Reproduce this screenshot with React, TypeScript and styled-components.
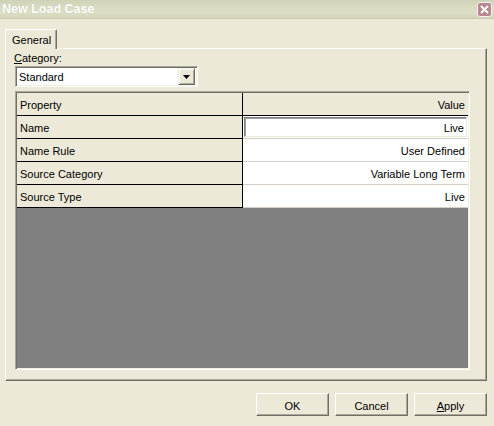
import styled, { createGlobalStyle } from 'styled-components';

const GlobalStyle = createGlobalStyle`
  html, body {
    margin: 0;
    padding: 0;
    background: #ece9d8;
  }
  body {
    font-family: "Liberation Sans", Arial, sans-serif;
    font-size: 11px;
    color: #000;
  }
`;

const Window = styled.div`
  width: 494px;
  height: 426px;
  background: #ece9d8;
  display: flex;
  flex-direction: column;
  overflow: hidden;
`;

const TitleBar = styled.div`
  height: 18px;
  border-bottom: 1px solid #c8cbaf;
  background: linear-gradient(180deg, #cfd2b6 0%, #dadcc2 45%, #dcdfc5 70%, #d3d6ba 100%);
  display: flex;
  align-items: center;
  justify-content: space-between;
  padding: 0 2px 0 2px;
`;

const TitleText = styled.span`
  color: #fff;
  font-weight: bold;
  font-size: 12.5px;
  text-shadow: 0 0 1px #b8bba0;
`;

const CloseButton = styled.div`
  width: 13px;
  height: 13px;
  border: 1px solid #f4eff1;
  border-radius: 3px;
  background: #b6878f;
  display: flex;
  align-items: center;
  justify-content: center;
  margin-top: 1px;
`;

const Body = styled.div`
  flex: 1;
  display: flex;
  flex-direction: column;
  padding: 10px 7px 0 5px;
`;

const TabStrip = styled.div`
  display: flex;
`;

const Tab = styled.div`
  box-sizing: border-box;
  width: 52px;
  height: 20px;
  margin-bottom: -1px;
  position: relative;
  z-index: 1;
  background: #ece9d8;
  border-top: 1px solid #fff;
  border-left: 1px solid #fff;
  border-right: 1px solid #716f64;
  box-shadow: inset -1px 0 #aca899;
  border-radius: 2px 2px 0 0;
  padding: 3px 0 0 6px;
  line-height: 14px;
`;

const Panel = styled.div`
  box-sizing: border-box;
  width: 482px;
  height: 333px;
  border-top: 1px solid #fff;
  border-left: 1px solid #fff;
  border-right: 1px solid #716f64;
  border-bottom: 1px solid #716f64;
  box-shadow: inset -1px -1px #aca899;
  padding: 1px 0 0 9px;
  display: flex;
  flex-direction: column;
`;

const FieldLabel = styled.div`
  line-height: 14px;
  margin-left: -1px;
  padding-top: 1px;
  height: 14px;
`;

const Combo = styled.div`
  box-sizing: border-box;
  width: 183px;
  height: 21px;
  margin-top: 1px;
  background: #fff;
  border-top: 1px solid #aca899;
  border-left: 1px solid #aca899;
  border-right: 1px solid #fff;
  border-bottom: 1px solid #fff;
  box-shadow: inset 1px 1px #716f64, inset -1px -1px #f1efe2;
  display: flex;
  align-items: center;
  justify-content: space-between;
  padding: 2px 2px 2px 3px;
`;

const ComboText = styled.span`
  line-height: 15px;
  padding-top: 1px;
`;

const ComboArrow = styled.div`
  box-sizing: border-box;
  width: 17px;
  height: 17px;
  background: #ece9d8;
  border-top: 1px solid #f1efe2;
  border-left: 1px solid #f1efe2;
  border-right: 1px solid #716f64;
  border-bottom: 1px solid #716f64;
  box-shadow: inset 1px 1px #fff, inset -1px -1px #aca899;
  display: flex;
  align-items: center;
  justify-content: center;
`;

const Grid = styled.div`
  box-sizing: border-box;
  width: 455px;
  height: 279px;
  margin-top: 4px;
  background: #808080;
  border-top: 1px solid #aca899;
  border-left: 1px solid #aca899;
  border-right: 1px solid #fff;
  border-bottom: 1px solid #fff;
  box-shadow: inset 1px 1px #716f64, inset -1px -1px #f1efe2;
  padding: 1px;
  display: flex;
  flex-direction: column;
`;

const Row = styled.div`
  display: grid;
  grid-template-columns: 226px 225px;
  height: 23px;
`;

const NameCell = styled.div`
  box-sizing: border-box;
  background: #ece9d8;
  border-right: 1px solid #000;
  border-bottom: 1px solid #000;
  padding: 5px 0 0 3px;
  line-height: 14px;
  white-space: nowrap;
`;

const ValueCell = styled.div<{ $header?: boolean }>`
  box-sizing: border-box;
  background: ${(p) => (p.$header ? '#ece9d8' : '#fff')};
  border-bottom: 1px solid ${(p) => (p.$header ? '#000' : '#d4d0c8')};
  padding: 5px 3px 0 0;
  line-height: 14px;
  text-align: right;
  white-space: nowrap;
`;

const EditCell = styled.div`
  box-sizing: border-box;
  border-bottom: 1px solid #d4d0c8;
  background: #fff;
  padding: 1px;
`;

const EditBox = styled.div`
  box-sizing: border-box;
  height: 20px;
  border-top: 1px solid #808080;
  border-left: 1px solid #808080;
  border-right: 1px solid #ece9d8;
  border-bottom: 1px solid #ece9d8;
  box-shadow: inset 1px 1px #a0a0a0;
  padding: 3px 2px 0 0;
  line-height: 14px;
  text-align: right;
`;

const ButtonRow = styled.div`
  display: flex;
  justify-content: flex-end;
  gap: 6px;
  margin-top: 12px;
`;

const Button = styled.button`
  box-sizing: border-box;
  width: 73px;
  height: 23px;
  background: #ece9d8;
  border-top: 1px solid #fff;
  border-left: 1px solid #fff;
  border-right: 1px solid #716f64;
  border-bottom: 1px solid #716f64;
  box-shadow: inset -1px -1px #aca899;
  border-radius: 0;
  font-family: "Liberation Sans", Arial, sans-serif;
  font-size: 11px;
  color: #000;
  padding: 2px 0 0 0;
`;

const rows = [
  { name: 'Name Rule', value: 'User Defined' },
  { name: 'Source Category', value: 'Variable Long Term' },
  { name: 'Source Type', value: 'Live' },
];

export default function App() {
  return (
    <>
      <GlobalStyle />
      <Window>
        <TitleBar>
          <TitleText>New Load Case</TitleText>
          <CloseButton>
            <svg width="9" height="9" viewBox="0 0 9 9">
              <path d="M1 1 L8 8 M8 1 L1 8" stroke="#fff" strokeWidth="2" />
            </svg>
          </CloseButton>
        </TitleBar>
        <Body>
          <TabStrip>
            <Tab>General</Tab>
          </TabStrip>
          <Panel>
            <FieldLabel>
              <u>C</u>ategory:
            </FieldLabel>
            <Combo>
              <ComboText>Standard</ComboText>
              <ComboArrow>
                <svg width="7" height="4" viewBox="0 0 7 4">
                  <path d="M0 0 H7 L3.5 4 Z" fill="#000" />
                </svg>
              </ComboArrow>
            </Combo>
            <Grid>
              <Row>
                <NameCell>Property</NameCell>
                <ValueCell $header>Value</ValueCell>
              </Row>
              <Row>
                <NameCell>Name</NameCell>
                <EditCell>
                  <EditBox>Live</EditBox>
                </EditCell>
              </Row>
              {rows.map((r) => (
                <Row key={r.name}>
                  <NameCell>{r.name}</NameCell>
                  <ValueCell>{r.value}</ValueCell>
                </Row>
              ))}
            </Grid>
          </Panel>
          <ButtonRow>
            <Button>OK</Button>
            <Button>Cancel</Button>
            <Button>
              <u>A</u>pply
            </Button>
          </ButtonRow>
        </Body>
      </Window>
    </>
  );
}
